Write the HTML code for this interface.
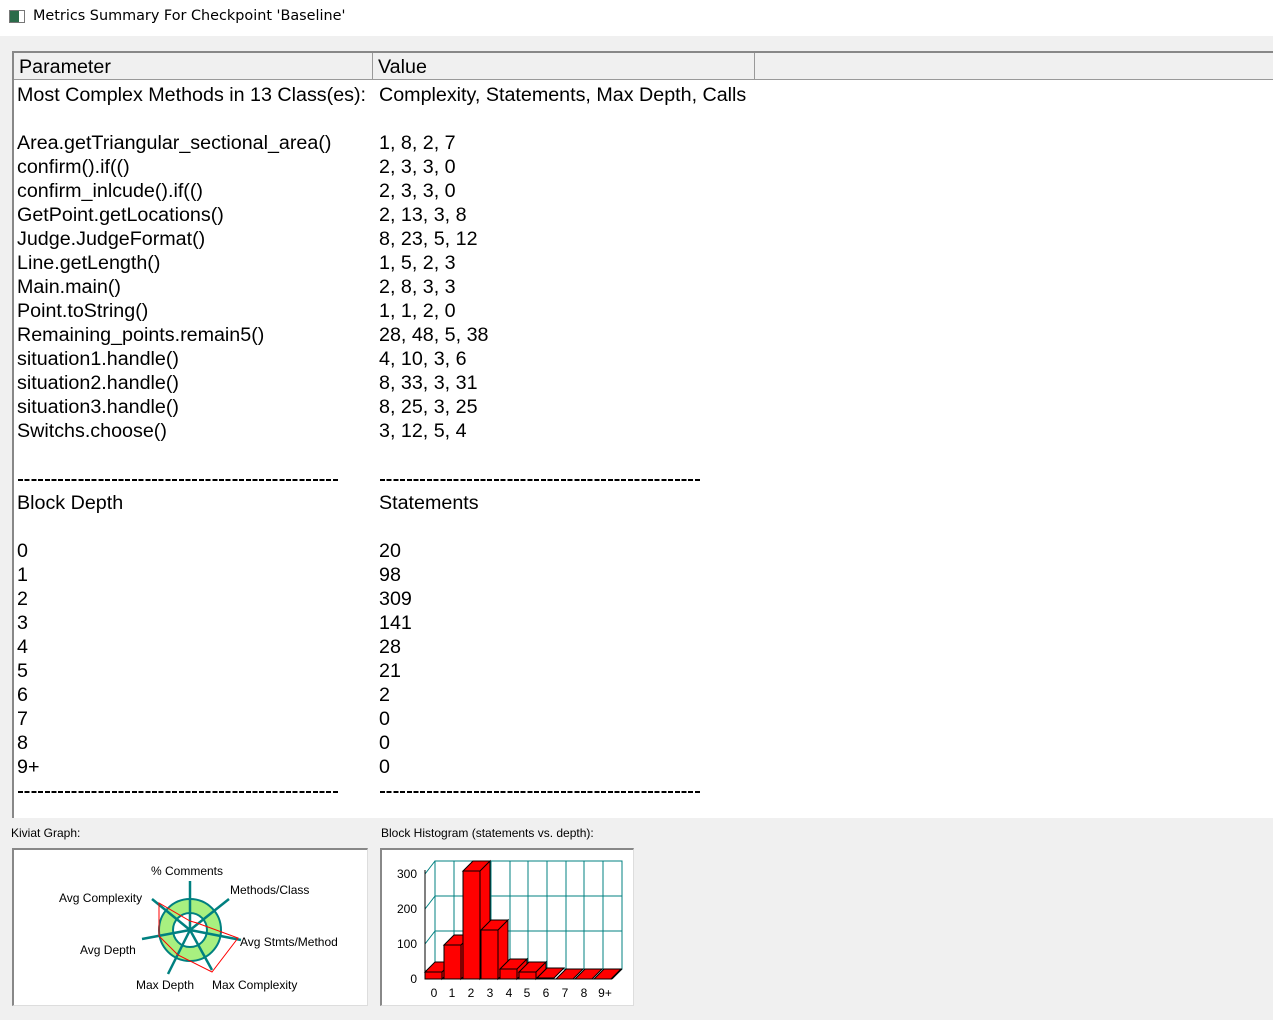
<!DOCTYPE html>
<html><head><meta charset="utf-8"><style>
*{margin:0;padding:0;box-sizing:border-box}
body{width:1273px;height:1020px;background:#f0f0f0;position:relative;overflow:hidden;font-family:"Liberation Sans",Arial,sans-serif}
#title{position:absolute;left:0;top:0;width:1273px;height:36px;background:#fff}
#title span{position:absolute;left:33px;top:8px;color:#000;font-family:"DejaVu Sans","Liberation Sans",sans-serif;font-size:14.4px}
#icon{position:absolute;left:9px;top:10px;width:16px;height:13px;border:1px solid #777;background:linear-gradient(90deg,#2a6b4a 0 9px,#fff 9px)}
#table{position:absolute;left:12px;top:51px;width:1261px;height:767px;background:#fff;border-left:2px solid #888;border-top:2px solid #888}
#hdr{position:absolute;left:0;top:0;width:1261px;height:27px;background:#f0f0f0;border-bottom:1px solid #999}
.h{position:absolute;top:0;height:26px;font-size:19.7px;line-height:28px;padding-left:5px;border-right:1px solid #999}
.r{position:absolute;font-size:19.7px;line-height:24px;white-space:pre;color:#000}
.dash{position:absolute;height:2px;top:426px;background:repeating-linear-gradient(90deg,#000 0 5px,transparent 5px 6.7px)}
.lbl{position:absolute;font-size:12px;color:#000}
.box{position:absolute;background:#fff;border-left:2px solid #888;border-top:2px solid #888;border-right:1px solid #ddd;border-bottom:1px solid #ddd}
</style></head><body>
<div id="title"><div id="icon"></div><span>Metrics Summary For Checkpoint 'Baseline'</span></div>
<div id="table">
<div id="hdr"><div class="h" style="left:0;width:359px">Parameter</div><div class="h" style="left:359px;width:382px">Value</div></div>
<div class="r" style="left:3px;top:30px">Most Complex Methods in 13 Class(es):

Area.getTriangular_sectional_area()
confirm().if(()
confirm_inlcude().if(()
GetPoint.getLocations()
Judge.JudgeFormat()
Line.getLength()
Main.main()
Point.toString()
Remaining_points.remain5()
situation1.handle()
situation2.handle()
situation3.handle()
Switchs.choose()


Block Depth

0
1
2
3
4
5
6
7
8
9+</div>
<div class="r" style="left:365px;top:30px">Complexity, Statements, Max Depth, Calls

1, 8, 2, 7
2, 3, 3, 0
2, 3, 3, 0
2, 13, 3, 8
8, 23, 5, 12
1, 5, 2, 3
2, 8, 3, 3
1, 1, 2, 0
28, 48, 5, 38
4, 10, 3, 6
8, 33, 3, 31
8, 25, 3, 25
3, 12, 5, 4


Statements

20
98
309
141
28
21
2
0
0
0</div>
<div class="dash" style="left:4px;width:321px"></div>
<div class="dash" style="left:366px;width:321px"></div>
<div class="dash" style="left:4px;width:321px;top:738px"></div>
<div class="dash" style="left:366px;width:321px;top:738px"></div>
</div>
<div class="lbl" style="left:11px;top:826px">Kiviat Graph:</div>
<div class="lbl" style="left:381px;top:826px">Block Histogram (statements vs. depth):</div>
<div class="box" style="left:12px;top:848px;width:356px;height:158px"></div>
<div class="box" style="left:380px;top:848px;width:254px;height:158px"></div>
<svg style="position:absolute;left:0;top:0" width="1273" height="1020" font-family="Liberation Sans,Arial,sans-serif" font-size="12">
<circle cx="190" cy="930" r="24" fill="none" stroke="#008080" stroke-width="16"/>
<circle cx="190" cy="930" r="24" fill="none" stroke="#a8f080" stroke-width="12"/>
<g stroke="#008080" stroke-width="2.5">
<line x1="190" y1="930" x2="190" y2="881"/>
<line x1="190" y1="930" x2="229" y2="899"/>
<line x1="190" y1="930" x2="241" y2="940"/>
<line x1="190" y1="930" x2="212" y2="970"/>
<line x1="190" y1="930" x2="168" y2="974"/>
<line x1="190" y1="930" x2="142" y2="939"/>
<line x1="190" y1="930" x2="152" y2="899"/>
</g>
<polygon points="190,921 197,923 238,938 212,972 178,955 159,936 159,903" fill="none" stroke="red" stroke-width="1"/>
<text x="151" y="875">% Comments</text>
<text x="230" y="894">Methods/Class</text>
<text x="59" y="902">Avg Complexity</text>
<text x="240" y="946">Avg Stmts/Method</text>
<text x="80" y="954">Avg Depth</text>
<text x="136" y="989">Max Depth</text>
<text x="212" y="989">Max Complexity</text>
<g stroke="#008080" stroke-width="1" fill="none">
<rect x="435" y="861" width="187" height="108"/>
<line x1="435" y1="896" x2="622" y2="896"/><line x1="435" y1="931" x2="622" y2="931"/>
<line x1="425" y1="874" x2="435" y2="861"/><line x1="425" y1="909" x2="435" y2="896"/><line x1="425" y1="944" x2="435" y2="931"/>
<line x1="454" y1="861" x2="454" y2="969"/><line x1="472" y1="861" x2="472" y2="969"/><line x1="491" y1="861" x2="491" y2="969"/><line x1="510" y1="861" x2="510" y2="969"/><line x1="528" y1="861" x2="528" y2="969"/><line x1="547" y1="861" x2="547" y2="969"/><line x1="566" y1="861" x2="566" y2="969"/><line x1="584" y1="861" x2="584" y2="969"/><line x1="603" y1="861" x2="603" y2="969"/>
</g>
<g stroke="#000" stroke-width="1"><line x1="425" y1="870" x2="425" y2="979"/><line x1="425" y1="979" x2="612" y2="979"/><line x1="612" y1="979" x2="622" y2="969"/><line x1="425" y1="979" x2="435" y2="969"/></g>
<g fill="red" stroke="#000" stroke-width="1">
<path d="M425 972h17v7h-17z M425 972l10-10h17l-10 10z M442 972l10-10v7l-10 10z"/>
<path d="M444 945h17v34h-17z M444 945l10-10h17l-10 10z M461 945l10-10v34l-10 10z"/>
<path d="M463 871h17v108h-17z M463 871l10-10h17l-10 10z M480 871l10-10v108l-10 10z"/>
<path d="M481 930h17v49h-17z M481 930l10-10h17l-10 10z M498 930l10-10v49l-10 10z"/>
<path d="M500 969h17v10h-17z M500 969l10-10h17l-10 10z M517 969l10-10v10l-10 10z"/>
<path d="M519 972h17v7h-17z M519 972l10-10h17l-10 10z M536 972l10-10v7l-10 10z"/>
<path d="M537 978h17v1h-17z M537 978l10-10h17l-10 10z"/>
<path d="M556 979l10-10h17l-10 10z"/><path d="M575 979l10-10h17l-10 10z"/><path d="M594 979l10-10h17l-10 10z"/>
</g>
<g font-size="12" text-anchor="end"><text x="417" y="878">300</text><text x="417" y="913">200</text><text x="417" y="948">100</text><text x="417" y="983">0</text></g>
<g font-size="12" text-anchor="middle"><text x="434" y="997">0</text><text x="452" y="997">1</text><text x="471" y="997">2</text><text x="490" y="997">3</text><text x="509" y="997">4</text><text x="527" y="997">5</text><text x="546" y="997">6</text><text x="565" y="997">7</text><text x="584" y="997">8</text><text x="605" y="997">9+</text></g>
</svg>
</body></html>
